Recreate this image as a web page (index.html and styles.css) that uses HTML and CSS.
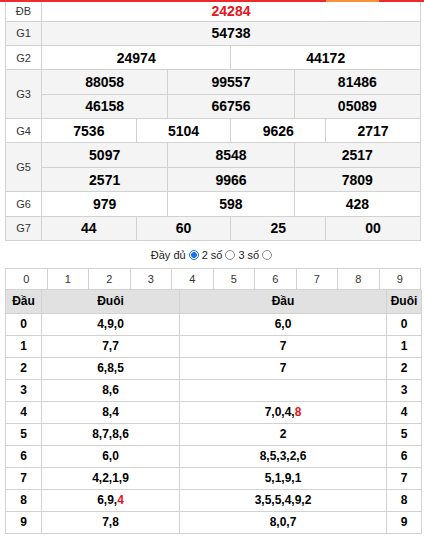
FILE: index.html
```html
<!DOCTYPE html>
<html lang="vi">
<head>
<meta charset="utf-8">
<link rel="stylesheet" href="styles.css">
</head>
<body>
<div class="topbar"><span class="seg red a"></span><span class="seg orange"></span><span class="seg red b"></span></div>
<table class="kq">
  <colgroup><col class="lab"><col><col><col><col><col><col><col><col><col><col><col><col></colgroup>
  <tr class="db"><td class="l">ĐB</td><td colspan="12" class="n red">24284</td></tr>
  <tr class="alt"><td class="l">G1</td><td colspan="12" class="n">54738</td></tr>
  <tr><td class="l">G2</td><td colspan="6" class="n">24974</td><td colspan="6" class="n">44172</td></tr>
  <tr class="alt"><td class="l" rowspan="2">G3</td><td colspan="4" class="n">88058</td><td colspan="4" class="n">99557</td><td colspan="4" class="n">81486</td></tr>
  <tr class="alt"><td colspan="4" class="n">46158</td><td colspan="4" class="n">66756</td><td colspan="4" class="n">05089</td></tr>
  <tr><td class="l">G4</td><td colspan="3" class="n">7536</td><td colspan="3" class="n">5104</td><td colspan="3" class="n">9626</td><td colspan="3" class="n">2717</td></tr>
  <tr class="alt"><td class="l" rowspan="2">G5</td><td colspan="4" class="n">5097</td><td colspan="4" class="n">8548</td><td colspan="4" class="n">2517</td></tr>
  <tr class="alt"><td colspan="4" class="n">2571</td><td colspan="4" class="n">9966</td><td colspan="4" class="n">7809</td></tr>
  <tr><td class="l">G6</td><td colspan="4" class="n">979</td><td colspan="4" class="n">598</td><td colspan="4" class="n">428</td></tr>
  <tr class="alt"><td class="l">G7</td><td colspan="3" class="n">44</td><td colspan="3" class="n">60</td><td colspan="3" class="n">25</td><td colspan="3" class="n">00</td></tr>
</table>

<div class="opts">
  <span>Đầy đủ</span><span class="radio on"></span><span>2 số</span><span class="radio"></span><span>3 số</span><span class="radio"></span>
</div>

<table class="digits">
  <tr><td>0</td><td>1</td><td>2</td><td>3</td><td>4</td><td>5</td><td>6</td><td>7</td><td>8</td><td>9</td></tr>
</table>
<table class="loto">
  <colgroup><col class="c1"><col class="c2"><col class="c3"><col class="c4"></colgroup>
  <tr><th>Đầu</th><th>Đuôi</th><th>Đầu</th><th>Đuôi</th></tr>
  <tr><td>0</td><td>4,9,0</td><td>6,0</td><td>0</td></tr>
  <tr><td>1</td><td>7,7</td><td>7</td><td>1</td></tr>
  <tr><td>2</td><td>6,8,5</td><td>7</td><td>2</td></tr>
  <tr><td>3</td><td>8,6</td><td></td><td>3</td></tr>
  <tr><td>4</td><td>8,4</td><td>7,0,4,<span class="red">8</span></td><td>4</td></tr>
  <tr><td>5</td><td>8,7,8,6</td><td>2</td><td>5</td></tr>
  <tr><td>6</td><td>6,0</td><td>8,5,3,2,6</td><td>6</td></tr>
  <tr><td>7</td><td>4,2,1,9</td><td>5,1,9,1</td><td>7</td></tr>
  <tr><td>8</td><td>6,9,<span class="red">4</span></td><td>3,5,5,4,9,2</td><td>8</td></tr>
  <tr><td>9</td><td>7,8</td><td>8,0,7</td><td>9</td></tr>
</table>
</body>
</html>
```

FILE: styles.css
```css
* { box-sizing: border-box; }
body {
  margin: 0;
  font-family: "Liberation Sans", Arial, sans-serif;
  color: #000;
  background: #fff;
}
.topbar {
  display: flex;
  height: 2px;
}
.seg { display: block; height: 2px; }
.seg.red { background: #ee2a2e; }
.seg.a { width: 326px; }
.seg.orange { width: 53px; background: #f7923a; }
.seg.b { flex: 1; }

table {
  border-collapse: collapse;
  table-layout: fixed;
  width: 416px;
  margin-left: 5px;
}
.kq td {
  border: 1px solid #d2d2d2;
  text-align: center;
  padding: 0;
  height: 24.4px;
}
.kq col.lab { width: 36px; }
.kq tr.db td { height: 19px; border-top: none; }
.kq tr.alt td { background: #f4f4f4; }
.kq td.l {
  font-size: 11px;
  color: #333;
}
.kq td.n {
  font-size: 14px;
  font-weight: bold;
}
.red { color: #e8141c; }

.opts {
  display: flex;
  justify-content: center;
  align-items: center;
  gap: 2px;
  height: 27px;
  padding-top: 1px;
  font-size: 11px;
  color: #222;
}
.radio {
  display: inline-block;
  width: 10px;
  height: 10px;
  border: 1px solid #8a8a8a;
  border-radius: 50%;
  margin: 0 1px;
  background: #fff;
}
.radio.on {
  border-color: #1a73e8;
  background: radial-gradient(circle, #1a73e8 0 2.6px, #fff 3.2px);
}

.digits td {
  border: 1px solid #d2d2d2;
  text-align: center;
  font-size: 11px;
  color: #333;
  height: 21px;
  padding: 0;
}
.loto col.c1 { width: 36px; }
.loto col.c2 { width: 138px; }
.loto col.c3 { width: 207px; }
.loto col.c4 { width: 35px; }
.loto th, .loto td {
  border: 1px solid #d2d2d2;
  text-align: center;
  font-size: 12px;
  font-weight: bold;
  padding: 0;
}
.loto tr:first-child th { border-top: none; }
.loto th {
  background: #e1e1e1;
  height: 23px;
}
.loto td { height: 22px; }
```
